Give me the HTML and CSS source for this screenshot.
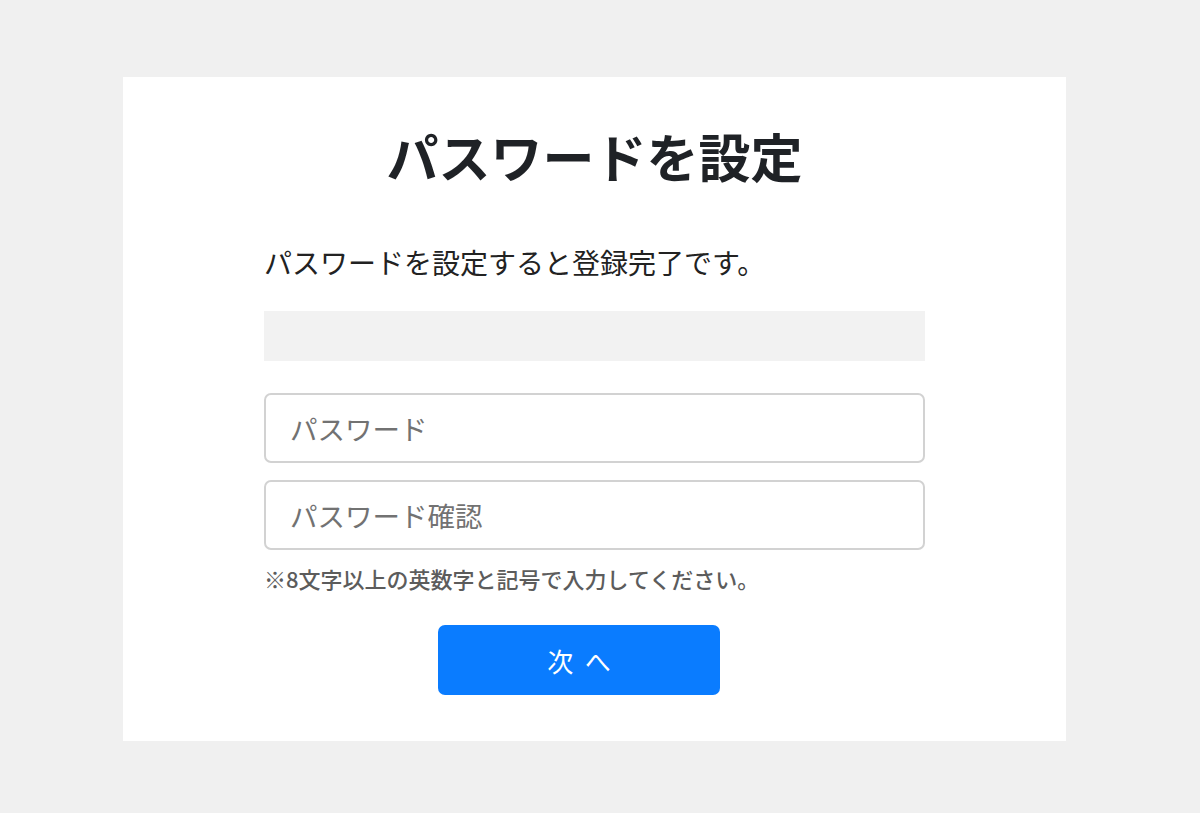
FILE: index.html
```html
<!DOCTYPE html>
<html lang="ja">
<head>
    <meta charset="UTF-8">
    <meta name="viewport" content="width=device-width, initial-scale=1.0">
    <title>パスワードを設定</title>
    <link rel="stylesheet" href="styles.css">
</head>
<body>
    <!-- Password form card -->
    <div class="card">
        <h1 class="card-title">パスワードを設定</h1>
        <p class="lead">パスワードを設定すると登録完了です。</p>
        <div class="notice-bar"></div>

        <form class="password-form">
            <input type="password" class="field" placeholder="パスワード">
            <input type="password" class="field" placeholder="パスワード確認">
            <p class="hint">※8文字以上の英数字と記号で入力してください。</p>
            <button type="button" class="next-button">次へ</button>
        </form>
    </div>
</body>
</html>
```

FILE: styles.css
```css
* {
    margin: 0;
    padding: 0;
    box-sizing: border-box;
}

body {
    font-family: "Noto Sans CJK JP", "Noto Sans", sans-serif;
    background: #f0f0f0;
    color: #222;
    min-height: 100vh;
}

.card {
    width: 943px;
    margin: 77px 0 0 123px;
    padding: 48px 141px 46px;
    background: #fff;
}

.card-title {
    font-size: 52px;
    line-height: 62px;
    font-weight: 700;
    text-align: center;
    color: #1f2226;
}

.lead {
    margin-top: 55px;
    font-size: 28px;
    line-height: 40px;
    color: #222;
}

.notice-bar {
    margin-top: 29px;
    height: 50px;
    background: #f2f2f2;
}

.password-form {
    margin-top: 32px;
    display: flex;
    flex-direction: column;
}

.field {
    height: 70px;
    padding: 0 24px;
    border: 2px solid #d2d2d2;
    border-radius: 7px;
    background: #fff;
    font-family: inherit;
    font-size: 27.5px;
    color: #222;
    outline: none;
}

.field + .field {
    margin-top: 17px;
}

.field::placeholder {
    color: #727272;
}

.hint {
    margin-top: 13px;
    font-size: 22px;
    line-height: 30px;
    color: #5c5c5c;
    font-weight: 500;
}

.next-button {
    align-self: flex-start;
    margin: 32px 0 0 174px;
    width: 282px;
    height: 70px;
    border: none;
    border-radius: 7px;
    background: #0a7cff;
    color: #fff;
    font-family: inherit;
    font-size: 26px;
    letter-spacing: 0.45em;
    text-indent: 0.45em;
    cursor: pointer;
}
```
